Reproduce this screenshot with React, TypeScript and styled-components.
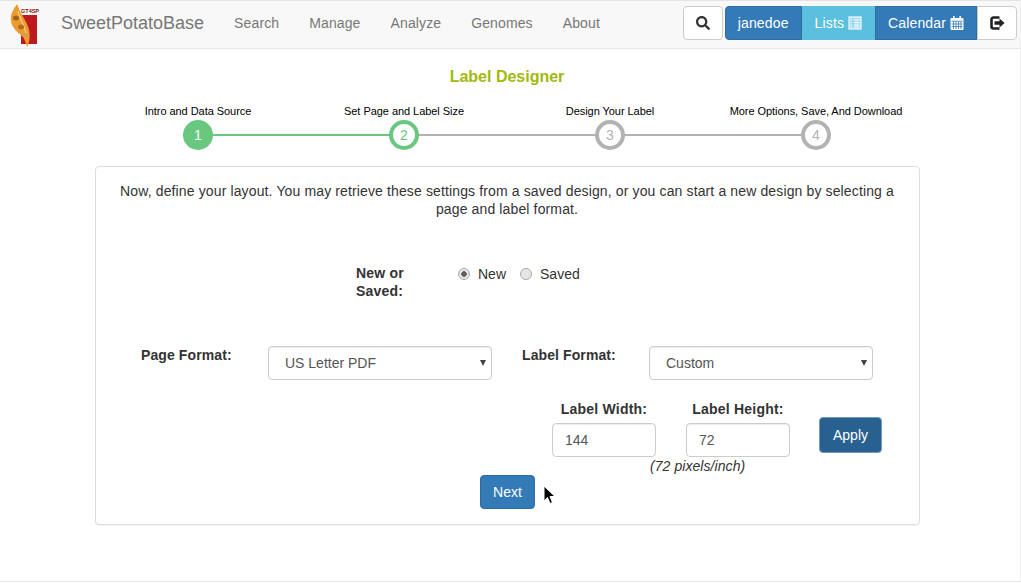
import React from "react";
import styled, { createGlobalStyle } from "styled-components";
import { FaSearch } from "react-icons/fa";

const Global = createGlobalStyle`
  html, body { margin: 0; padding: 0; background: #fff; }
  body { font-family: "Liberation Sans", Arial, sans-serif; font-size: 14px; color: #333; }
  * { box-sizing: border-box; }
`;

const Page = styled.div`
  position: relative;
  width: 1021px;
  height: 582px;
  overflow: hidden;
  border-bottom: 1px solid #e7e7e7;
  border-right: 1px solid #eee;
`;

const Navbar = styled.nav`
  height: 49px;
  background: #f8f8f8;
  border-top: 1px solid #e4e4e4;
  border-bottom: 1px solid #e7e7e7;
  display: flex;
  align-items: flex-start;
  padding: 0 3px 0 10px;
`;

const Logo = styled.svg`
  width: 30px;
  height: 44px;
  margin-top: 2px;
  flex: none;
`;

const Brand = styled.span`
  font-size: 18px;
  color: #777;
  margin: 12px 15px 0 21px;
  line-height: 20px;
`;

const NavLinks = styled.div`
  display: flex;
  flex: 1;
`;

const NavLink = styled.a`
  color: #777;
  font-size: 14px;
  line-height: 20px;
  letter-spacing: 0.12px;
  padding: 12px 15px 14px;
`;

const NavActions = styled.div`
  display: flex;
  margin-top: 5px;
`;

const NavButton = styled.button<{ $tone: "plain" | "blue" | "info"; $first?: boolean; $last?: boolean }>`
  height: 34px;
  font: 14px/20px "Liberation Sans", Arial, sans-serif;
  letter-spacing: 0.14px;
  padding: 0 12px;
  display: flex;
  align-items: center;
  justify-content: center;
  gap: 4px;
  border: 1px solid ${p => (p.$tone === "plain" ? "#ccc" : p.$tone === "blue" ? "#2e6da4" : "#5bc0de")};
  background: ${p => (p.$tone === "plain" ? "#fff" : p.$tone === "blue" ? "#337ab7" : "#5bc0de")};
  color: ${p => (p.$tone === "plain" ? "#333" : "#fff")};
  border-radius: ${p => (p.$first ? "4px 0 0 4px" : p.$last ? "0 4px 4px 0" : "0")};
`;

const SearchButton = styled(NavButton)`
  width: 40px;
  border-radius: 4px;
  margin-right: 2px;
`;

const LogoutButton = styled(NavButton)`
  width: 40px;
`;

const ButtonIcon = styled.svg`
  width: 14px;
  height: 14px;
  flex: none;
`;

const LogoutIcon = styled.svg`
  width: 15px;
  height: 14px;
  flex: none;
`;

const Main = styled.main`
  width: 825px;
  margin: 0 0 0 95px;
`;

const Title = styled.h4`
  margin: 19px 0 0;
  font-size: 16px;
  line-height: 18px;
  font-weight: 700;
  color: #a2b90d;
  text-align: center;
  width: 824px;
`;

const Wizard = styled.ol`
  list-style: none;
  margin: 18px 0 0;
  padding: 0;
  display: grid;
  grid-template-columns: repeat(4, 206px);
`;

const Step = styled.li`
  position: relative;
  display: flex;
  flex-direction: column;
  align-items: center;
`;

const StepLabel = styled.span`
  font-size: 11px;
  line-height: 14px;
  color: #000;
  white-space: nowrap;
  margin-bottom: 2px;
  letter-spacing: -0.05px;
`;

const Connector = styled.span<{ $done: boolean }>`
  position: absolute;
  left: 50%;
  width: 100%;
  top: 30px;
  height: 2px;
  background: ${p => (p.$done ? "#69c77f" : "#b3b3b3")};
`;

const Bullet = styled.span<{ $state: "done" | "active" | "todo" }>`
  position: relative;
  width: 30px;
  height: 30px;
  border-radius: 50%;
  display: flex;
  align-items: center;
  justify-content: center;
  font-size: 14px;
  border: 4px solid ${p => (p.$state === "todo" ? "#b3b3b3" : "#69c77f")};
  background: ${p => (p.$state === "done" ? "#69c77f" : "#fff")};
  color: ${p => (p.$state === "done" ? "#fff" : p.$state === "active" ? "#69c77f" : "#b3b3b3")};
`;

const Panel = styled.section`
  margin-top: 16px;
  height: 359px;
  background: #fff;
  border: 1px solid #ddd;
  border-radius: 4px;
  box-shadow: 0 1px 1px rgba(0, 0, 0, 0.05);
  padding-top: 15px;
`;

const Intro = styled.p`
  margin: 0 0 0 16px;
  width: 790px;
  text-align: center;
  font-size: 14px;
  line-height: 18px;
  letter-spacing: 0.13px;
`;

const RadioRow = styled.div`
  display: flex;
  margin: 46px 0 0 260px;
`;

const RadioTitle = styled.span`
  width: 102px;
  font-weight: 700;
  line-height: 18px;
  letter-spacing: 0.2px;
`;

const RadioOption = styled.label`
  display: flex;
  align-items: center;
  height: 18px;
  gap: 8px;
  margin: 1px 14px 0 0;
`;

const Radio = styled.input`
  appearance: none;
  width: 12px;
  height: 12px;
  margin: 0;
  border: 1px solid #aaa;
  border-radius: 50%;
  background: #e6e6e6;
  &:checked { background: radial-gradient(circle, #5f5f5f 0 2.5px, #e6e6e6 3px); }
`;

const FormatRow = styled.div`
  display: flex;
  align-items: flex-start;
  margin: 46px 0 0 45px;
`;

const FormatLabel = styled.label`
  width: 127px;
  font-weight: 700;
  line-height: 18px;
  letter-spacing: 0.1px;
`;

const SelectBox = styled.div`
  position: relative;
  width: 224px;
  height: 34px;
  margin-right: 30px;
  &::after {
    content: "";
    position: absolute;
    right: 6px;
    top: 14px;
    border-left: 3px solid transparent;
    border-right: 3px solid transparent;
    border-top: 6px solid #444;
  }
`;

const Select = styled.select`
  appearance: none;
  width: 100%;
  height: 100%;
  padding: 0 16px;
  font: 14px "Liberation Sans", Arial, sans-serif;
  color: #555;
  background: #fff;
  border: 1px solid #ccc;
  border-radius: 4px;
  box-shadow: inset 0 1px 1px rgba(0, 0, 0, 0.075);
`;

const SizeRow = styled.div`
  display: flex;
  align-items: flex-start;
  margin: 20px 0 0 456px;
`;

const SizeField = styled.label`
  width: 104px;
  margin-right: 30px;
  display: flex;
  flex-direction: column;
  align-items: center;
  font-weight: 700;
  line-height: 18px;
  letter-spacing: 0.2px;
  white-space: nowrap;
  gap: 5px;
`;

const SizeInput = styled.input`
  width: 104px;
  height: 34px;
  padding: 0 12px;
  font: 14px "Liberation Sans", Arial, sans-serif;
  color: #555;
  border: 1px solid #ccc;
  border-radius: 4px;
  box-shadow: inset 0 1px 1px rgba(0, 0, 0, 0.075);
`;

const ApplyButton = styled.button`
  margin: 17px 0 0 -1px;
  width: 63px;
  height: 36px;
  font: 14px "Liberation Sans", Arial, sans-serif;
  color: #fff;
  background: #286090;
  border: 1px solid #6f9cc0;
  border-radius: 4px;
`;

const Hint = styled.div`
  margin: 0 0 0 554px;
  font-style: italic;
  line-height: 18px;
  letter-spacing: 0.07px;
`;

const NextRow = styled.div`
  display: flex;
  margin: 0 0 0 384px;
`;

const NextButton = styled.button`
  width: 55px;
  height: 34px;
  font: 14px "Liberation Sans", Arial, sans-serif;
  color: #fff;
  background: #337ab7;
  border: 1px solid #2e6da4;
  border-radius: 4px;
`;

const Cursor = styled.svg`
  position: absolute;
  left: 543px;
  top: 485px;
  width: 14px;
  height: 21px;
`;

const steps = [
  { label: "Intro and Data Source", state: "done" as const },
  { label: "Set Page and Label Size", state: "active" as const },
  { label: "Design Your Label", state: "todo" as const },
  { label: "More Options, Save, And Download", state: "todo" as const },
];

export default function App() {
  return (
    <Page>
      <Global />
      <Navbar>
        <Logo viewBox="0 0 30 44">
          <rect x="11" y="12" width="16" height="29" fill="#bd1a20" />
          <path d="M7 1 C3 7 0 12 1 18 C2 26 9 30 13 34 C15 37 16 40 17 44 C21 37 20 27 17 21 C14 15 10 9 7 1 Z" fill="#ee9a2c" />
          <path d="M8 8 C10 16 14 22 16 30" stroke="#f8cf8c" strokeWidth="1.2" fill="none" />
          <ellipse cx="6" cy="15" rx="3" ry="2.5" fill="#9a6420" />
          <ellipse cx="11" cy="24" rx="3" ry="2.5" fill="#a96e24" />
          <ellipse cx="15" cy="32" rx="2.5" ry="2" fill="#c9a060" />
          <text x="11" y="9.5" fontSize="5.5" fontWeight="700" fill="#7a1a12" fontFamily="Liberation Sans">GT4SP</text>
        </Logo>
        <Brand>SweetPotatoBase</Brand>
        <NavLinks>
          {["Search", "Manage", "Analyze", "Genomes", "About"].map(n => (
            <NavLink key={n}>{n}</NavLink>
          ))}
        </NavLinks>
        <NavActions>
          <SearchButton $tone="plain" aria-label="Search"><FaSearch size={14} /></SearchButton>
          <NavButton $tone="blue" $first>janedoe</NavButton>
          <NavButton $tone="info">
            Lists
            <ButtonIcon viewBox="0 0 14 14">
              <rect x="1" y="1" width="12" height="12" fill="#a9dfee" stroke="#f2fbfd" strokeWidth="1.2" />
              <path d="M3 4h8M3 6.5h8M3 9h8M3 11h8" stroke="#f2fbfd" strokeWidth="1" />
              <path d="M5 3v9" stroke="#5bc0de" strokeWidth="0.8" />
            </ButtonIcon>
          </NavButton>
          <NavButton $tone="blue">
            Calendar
            <ButtonIcon viewBox="0 0 14 14">
              <rect x="0.5" y="2" width="13" height="12" rx="1" fill="#fff" />
              <rect x="3" y="0" width="1.6" height="3" fill="#fff" />
              <rect x="9.4" y="0" width="1.6" height="3" fill="#fff" />
              <path d="M1.5 5.2h11M1.5 8h11M1.5 10.6h11" stroke="#337ab7" strokeWidth="0.8" />
              <path d="M3.5 5.2v7.8M6 5.2v7.8M8.5 5.2v7.8M11 5.2v7.8" stroke="#337ab7" strokeWidth="0.8" />
            </ButtonIcon>
          </NavButton>
          <LogoutButton $tone="plain" $last aria-label="Log out">
            <LogoutIcon viewBox="0 0 15 14">
              <path d="M9.5 1.5H3.5a2 2 0 0 0-2 2v7a2 2 0 0 0 2 2h6" fill="none" stroke="#222" strokeWidth="2.6" />
              <path d="M4.5 5.3h5V2.6L14.6 7l-5.1 4.4V8.7h-5z" fill="#222" />
            </LogoutIcon>
          </LogoutButton>
        </NavActions>
      </Navbar>
      <Main>
        <Title>Label Designer</Title>
        <Wizard>
          {steps.map((s, i) => (
            <Step key={s.label}>
              <StepLabel>{s.label}</StepLabel>
              {i < 3 && <Connector $done={i === 0} />}
              <Bullet $state={s.state}>{i + 1}</Bullet>
            </Step>
          ))}
        </Wizard>
        <Panel>
          <Intro>
            Now, define your layout. You may retrieve these settings from a saved design, or you can start a new design by selecting a page and label format.
          </Intro>
          <RadioRow>
            <RadioTitle>New or<br />Saved:</RadioTitle>
            <RadioOption><Radio type="radio" name="mode" defaultChecked />New</RadioOption>
            <RadioOption><Radio type="radio" name="mode" />Saved</RadioOption>
          </RadioRow>
          <FormatRow>
            <FormatLabel>Page Format:</FormatLabel>
            <SelectBox><Select defaultValue="US Letter PDF"><option>US Letter PDF</option></Select></SelectBox>
            <FormatLabel>Label Format:</FormatLabel>
            <SelectBox><Select defaultValue="Custom"><option>Custom</option></Select></SelectBox>
          </FormatRow>
          <SizeRow>
            <SizeField>Label Width:<SizeInput defaultValue="144" /></SizeField>
            <SizeField>Label Height:<SizeInput defaultValue="72" /></SizeField>
            <ApplyButton>Apply</ApplyButton>
          </SizeRow>
          <Hint>(72 pixels/inch)</Hint>
          <NextRow><NextButton>Next</NextButton></NextRow>
        </Panel>
      </Main>
      <Cursor viewBox="0 0 14 21">
        <path d="M1 1 L1 16 L4.5 12.5 L7 18.5 L9.5 17.5 L7 11.5 L12 11.5 Z" fill="#000" stroke="#fff" strokeWidth="1" />
      </Cursor>
    </Page>
  );
}
